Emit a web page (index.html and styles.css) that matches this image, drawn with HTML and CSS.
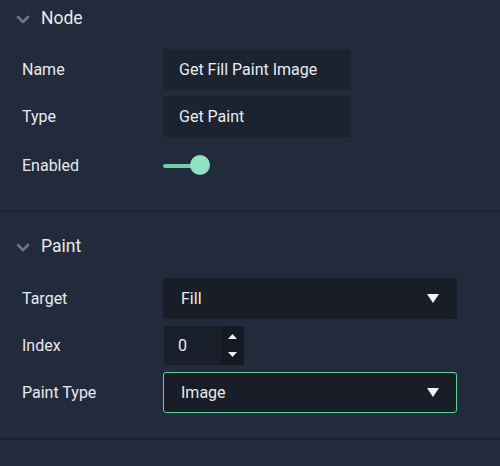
FILE: index.html
```html
<!DOCTYPE html>
<html>
<head>
<meta charset="utf-8">
<link rel="stylesheet" href="styles.css">
</head>
<body>
<div class="panel">
  <section class="section first">
    <div class="header">
      <svg class="chev" width="14" height="9" viewBox="0 0 14 9"><path d="M2 2 L7 7 L12 2" fill="none" stroke="#6b7486" stroke-width="2.6" stroke-linecap="round" stroke-linejoin="round"/></svg>
      <span class="title">Node</span>
    </div>
    <div class="rows">
      <div class="row"><span class="label">Name</span><div class="field">Get Fill Paint Image</div></div>
      <div class="row"><span class="label">Type</span><div class="field">Get Paint</div></div>
      <div class="row tall"><span class="label">Enabled</span><div class="toggle"><span class="track"></span><span class="knob"></span></div></div>
    </div>
  </section>
  <section class="section second">
    <div class="header">
      <svg class="chev" width="14" height="9" viewBox="0 0 14 9"><path d="M2 2 L7 7 L12 2" fill="none" stroke="#6b7486" stroke-width="2.6" stroke-linecap="round" stroke-linejoin="round"/></svg>
      <span class="title">Paint</span>
    </div>
    <div class="rows">
      <div class="row"><span class="label">Target</span><div class="select"><span>Fill</span><svg width="12" height="9" viewBox="0 0 12 9"><path d="M0 0 H12 L6 9 Z" fill="#f2f3f5"/></svg></div></div>
      <div class="row"><span class="label">Index</span><div class="number"><span class="num">0</span><div class="spin"><svg width="9" height="5" viewBox="0 0 9 5"><path d="M4.5 0 L9 5 H0 Z" fill="#eef0f3"/></svg><svg width="9" height="5" viewBox="0 0 9 5"><path d="M0 0 H9 L4.5 5 Z" fill="#eef0f3"/></svg></div></div></div>
      <div class="row"><span class="label">Paint Type</span><div class="select focus"><span>Image</span><svg width="12" height="9" viewBox="0 0 12 9"><path d="M0 0 H12 L6 9 Z" fill="#f2f3f5"/></svg></div></div>
    </div>
  </section>
</div>
</body>
</html>
```

FILE: styles.css
```css
html, body {
  margin: 0;
  padding: 0;
  background: #222b3b;
}
body {
  font-family: Roboto, "Liberation Sans", sans-serif;
  color: #e9ebef;
  width: 500px;
  height: 466px;
  overflow: hidden;
}
.section {
  border-bottom: 3px solid #1c2331;
}
.section.first {
  padding-bottom: 22px;
}
.section.second {
  padding-bottom: 24px;
}
.header {
  display: flex;
  align-items: center;
  height: 36px;
  padding-left: 16px;
}
.section.second .header {
  margin-top: 15px;
}
.chev {
  display: block;
  margin-top: 2px;
}
.title {
  margin-left: 11px;
  font-size: 17.5px;
  color: #e6e9ee;
}
.rows {
  display: flex;
  flex-direction: column;
  gap: 6px;
  padding-top: 13px;
}
.section.second .rows {
  padding-top: 14px;
}
.row {
  display: flex;
  align-items: center;
  min-height: 41px;
}
.row.tall {
  min-height: 45px;
}
.label {
  width: 141px;
  padding-left: 22px;
  font-size: 16px;
  color: #e6e9ee;
}
.field {
  width: 188px;
  height: 41px;
  box-sizing: border-box;
  background: #1c2330;
  padding-left: 16px;
  display: flex;
  align-items: center;
  font-size: 16px;
}
.toggle {
  position: relative;
  width: 48px;
  height: 45px;
  display: flex;
  align-items: center;
}
.track {
  width: 34px;
  height: 4px;
  border-radius: 2px;
  background: #6ecfa6;
}
.knob {
  position: absolute;
  left: 27px;
  top: 12px;
  width: 20px;
  height: 20px;
  border-radius: 50%;
  background: #8fe2c1;
}
.select {
  width: 294px;
  height: 41px;
  box-sizing: border-box;
  background: #181d27;
  border: 1px solid #181d27;
  border-radius: 3px;
  display: flex;
  align-items: center;
  justify-content: space-between;
  padding-left: 17px;
  padding-right: 17px;
  font-size: 16px;
}
.select.focus {
  border-color: #5fcf9c;
}
.number {
  margin-left: 1px;
  width: 80px;
  height: 39px;
  display: flex;
  background: #1a202b;
}
.num {
  width: 57px;
  box-sizing: border-box;
  padding-left: 14px;
  display: flex;
  align-items: center;
  font-size: 16px;
}
.spin {
  width: 23px;
  background: #141923;
  display: flex;
  flex-direction: column;
  align-items: center;
  justify-content: center;
  gap: 13px;
}
.spin svg { display: block; }
```
